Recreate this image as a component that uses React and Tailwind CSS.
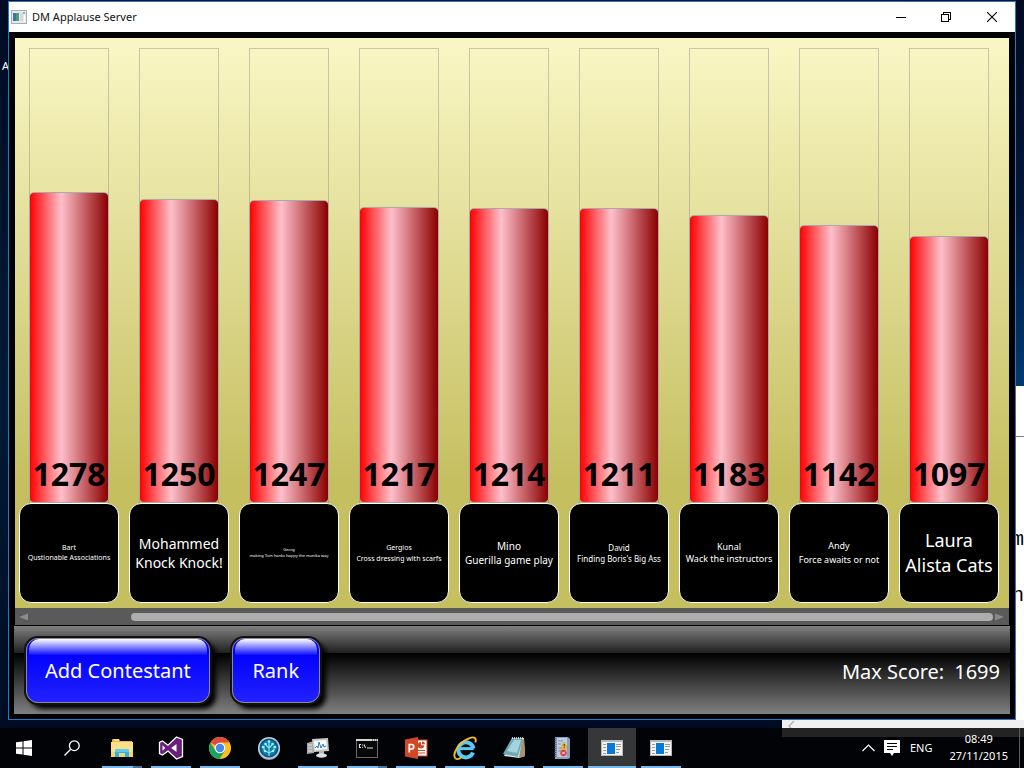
import React from "react";

const MAX_SCORE = 1699;
const SCALE_TOP = MAX_SCORE * 1.098;

const contestants = [
  { score: 1278, name: "Bart", act: "Qustionable Associations", text: "text-[7px] leading-[10px]" },
  { score: 1250, name: "Mohammed", act: "Knock Knock!", text: "text-[14px] leading-[19px]" },
  { score: 1247, name: "Georg", act: "making Tom hanks happy the monika way", text: "text-[4px] leading-[6px]" },
  { score: 1217, name: "Gergios", act: "Cross dressing with scarfs", text: "text-[7px] leading-[11px]" },
  { score: 1214, name: "Mino", act: "Guerilla game play", text: "text-[10px] leading-[14px]" },
  { score: 1211, name: "David", act: "Finding Boris's Big Ass", text: "text-[8px] leading-[11px]" },
  { score: 1183, name: "Kunal", act: "Wack the instructors", text: "text-[9px] leading-[12px]" },
  { score: 1142, name: "Andy", act: "Force awaits or not", text: "text-[9px] leading-[14px]" },
  { score: 1097, name: "Laura", act: "Alista Cats", text: "text-[18px] leading-[25px]" },
];

function AppIcon() {
  return (
    <svg width="16" height="14" viewBox="0 0 16 14" aria-hidden="true">
      <rect x="0.5" y="0.5" width="15" height="13" fill="#e9e9ec" stroke="#aaacb4" />
      <rect x="2" y="3" width="6" height="8" fill="#4f9a80" />
      <rect x="2" y="3" width="3" height="8" fill="#3c7a9a" />
      <rect x="9" y="3" width="3" height="8" fill="#d6d8da" />
      <rect x="12" y="2" width="2" height="2" fill="#7ec0b0" />
      <rect x="13" y="5" width="1" height="7" fill="#ffffff" />
    </svg>
  );
}

function TitleBar() {
  return (
    <header className="flex h-[30px] shrink-0 items-center bg-white pl-[2px] text-black">
      <AppIcon />
      <h1 className="ml-[5px] flex-1 text-[11px] leading-4 text-[#111]">DM Applause Server</h1>
      <button type="button" aria-label="Minimize" className="flex h-full w-11 items-center justify-center">
        <svg width="10" height="10" viewBox="0 0 10 10" shapeRendering="crispEdges"><path d="M0 5.5H10" stroke="#000" /></svg>
      </button>
      <button type="button" aria-label="Restore" className="flex h-full w-[46px] items-center justify-center">
        <svg width="10" height="10" viewBox="0 0 10 10" shapeRendering="crispEdges" fill="none" stroke="#000">
          <rect x="0.5" y="2.5" width="7" height="7" />
          <path d="M2.5 2.5V0.5H9.5V7.5H7.5" />
        </svg>
      </button>
      <button type="button" aria-label="Close" className="flex h-full w-[46px] items-center justify-center">
        <svg width="10" height="10" viewBox="0 0 10 10"><path d="M0 0L10 10M10 0L0 10" stroke="#000" strokeWidth="1.1" /></svg>
      </button>
    </header>
  );
}

function Contestant({ score, name, act, text }) {
  return (
    <li className="flex w-[100px] shrink-0 flex-col items-center">
      <div className="flex w-20 flex-1 flex-col justify-end border border-b-0 border-[#808080]/40">
        <div
          className="-mx-px flex items-end justify-center rounded-[5px] border border-[#a9a9a9] bg-[linear-gradient(90deg,#ff0000_0%,#ffc0cb_40%,#8b0000_100%)] pb-[6px]"
          style={{ height: `${(score / SCALE_TOP) * 100}%` }}
        >
          <span className="text-[32px] leading-[44px] font-bold text-black">{score}</span>
        </div>
      </div>
      <div className="flex h-[100px] w-full flex-col items-center justify-center rounded-xl border border-[#fffff0] bg-black text-white">
        <div className={`text-center whitespace-nowrap ${text}`}>
          <p>{name}</p>
          <p>{act}</p>
        </div>
      </div>
    </li>
  );
}

function ScrollBar() {
  return (
    <div className="flex h-[17px] shrink-0 items-center bg-[#5a5a5a] pr-[5px] pl-1">
      <svg width="9" height="8" viewBox="0 0 9 8" aria-hidden="true"><path d="M9 0.5V7.5L0 4Z" fill="#8a8a8a" /></svg>
      <div className="flex flex-1 justify-end pr-[2px]">
        <div className="h-2 w-[89.3%] rounded-full bg-[#adadad]" />
      </div>
      <svg width="9" height="8" viewBox="0 0 9 8" aria-hidden="true"><path d="M0 0.5V7.5L9 4Z" fill="#8a8a8a" /></svg>
    </div>
  );
}

function GlossButton({ children }) {
  return (
    <button
      type="button"
      className="relative h-[65px] min-w-[88px] rounded-xl border border-[#8c8c8c] bg-[linear-gradient(180deg,#0000ff_20%,#2222ff_100%)] px-[18px] pt-[2px] text-[20px] leading-7 text-white shadow-[0_0_0_2px_#111,5px_5px_5px_1px_#000]"
    >
      <span className="absolute inset-x-[2px] top-0 h-4 rounded-t-[10px] bg-[linear-gradient(180deg,#ffffff_0%,rgba(255,255,255,0.05)_100%)]" />
      <span className="relative">{children}</span>
    </button>
  );
}

function ControlBar() {
  return (
    <footer className="-mx-px mt-px flex h-[88px] shrink-0 items-center justify-between bg-[linear-gradient(180deg,#808080_0%,#222222_30%,#000000_31%,#808080_100%)] pr-[10px] pl-3 text-white">
      <div className="flex gap-[22px]">
        <GlossButton>Add Contestant</GlossButton>
        <GlossButton>Rank</GlossButton>
      </div>
      <p className="flex gap-[10px] pt-1 text-[20px] leading-7">
        <span>Max Score:</span>
        <span>{MAX_SCORE}</span>
      </p>
    </footer>
  );
}

const icons = {
  explorer: (
    <svg width="24" height="24" viewBox="0 0 24 24">
      <path d="M2 4Q2 3 3 3H9L10 5H22V8H2Z" fill="#e9b93e" />
      <path d="M4 4H9" stroke="#fff" />
      <rect x="1" y="6" width="22" height="15" fill="#fbe08a" />
      <rect x="1" y="16" width="22" height="5" fill="#f5d470" />
      <path d="M5 21V15Q5 13 7 13H17Q19 13 19 15V21H15V17H9V21Z" fill="#29b2e8" />
      <path d="M5 16V15Q5 13 7 13H17Q19 13 19 15V16Z" fill="#55cdf5" />
    </svg>
  ),
  vs: (
    <svg width="26" height="24" viewBox="0 0 26 24">
      <path d="M18.500 1L24.500 3.500V20.500L18.500 23L10 15L4.500 19L1.500 17.500V6.500L4.500 5L10 9.200Z" fill="#68217a" stroke="#fff" strokeWidth="1.300" />
      <path d="M18.500 8V16L13.200 12ZM4.500 9.300V14.700L7.200 12Z" fill="#fff" />
    </svg>
  ),
  chrome: (
    <svg width="24" height="24" viewBox="0 0 24 24">
      <circle cx="12" cy="12" r="11" fill="#fbc116" />
      <path d="M12 12L2.500 6.500A11 11 0 0 1 21.500 6.500Z" fill="#dd4b3e" />
      <path d="M2.500 6.500A11 11 0 0 0 11.500 23L17 14.500H12L7.300 14.500Z" fill="#1ba261" />
      <path d="M12 6.500H21.500L17 14.500Z" fill="#fbc116" />
      <circle cx="12" cy="12" r="5.300" fill="#fff" />
      <circle cx="12" cy="12" r="4.200" fill="#4688f1" />
    </svg>
  ),
  tree: (
    <svg width="24" height="24" viewBox="0 0 24 24">
      <circle cx="12" cy="13" r="11" fill="#7f92aa" />
      <circle cx="12" cy="12" r="11" fill="#b9cbdd" />
      <circle cx="12" cy="12" r="9.500" fill="#0d5480" />
      <circle cx="12" cy="12" r="7.800" fill="#0d7cab" />
      <g fill="none" stroke="#8de6e8" strokeWidth="1.100">
        <path d="M12 20V6M12 17L7 14V10M12 17L17 14V10M12 12L9 9M12 12L15 9" />
      </g>
      <g fill="#a8f2ee">
        <circle cx="12" cy="5.500" r="1.300" /><circle cx="8.500" cy="8" r="1.300" /><circle cx="15.500" cy="8" r="1.300" />
        <circle cx="6" cy="11" r="1.300" /><circle cx="18" cy="11" r="1.300" /><circle cx="8" cy="15" r="1.200" /><circle cx="16" cy="15" r="1.200" />
      </g>
    </svg>
  ),
  monitor: (
    <svg width="24" height="24" viewBox="0 0 24 24">
      <path d="M1 7L8 5V17L1 18Z" fill="#a9aaa8" />
      <path d="M2 9H6M2 12H6M2 15H6" stroke="#e4e4e2" />
      <path d="M6 3L22 2L23 15L8 16Z" fill="#c9cac7" />
      <path d="M8 5L20 4L21 13L9 14Z" fill="#f7fafc" />
      <path d="M9 12L11 10L12 12L13 6L15 12L17 8L18 11L20 10" fill="none" stroke="#2f80b8" />
      <path d="M13 15H18L18 19H13Z" fill="#b4b4b2" />
      <ellipse cx="15.500" cy="19.500" rx="5.500" ry="2.200" fill="#e0e0de" />
    </svg>
  ),
  cmd: (
    <svg width="24" height="24" viewBox="0 0 24 24">
      <rect x="1" y="3" width="22" height="19" fill="#6a6a6a" />
      <rect x="2" y="5" width="20" height="16" fill="#080808" />
      <rect x="1" y="3" width="22" height="2" fill="#d6d6d6" />
      <path d="M17 4H18M19 4H20M21 4H22" stroke="#333" />
      <path d="M6 8.500H4.500V11.500H6M7.500 8.500V9.500M7.500 10.800V11.800M9 8.500L10.500 11.800M12 12H18" fill="none" stroke="#e0e0e0" strokeWidth="1.100" />
    </svg>
  ),
  powerpoint: (
    <svg width="24" height="24" viewBox="0 0 24 24">
      <rect x="12" y="4" width="11" height="16" fill="#fff" stroke="#d24726" />
      <path d="M17 6A3.200 3.200 0 1 0 20.200 9.200H17Z" fill="#d24726" />
      <path d="M18 5.500A3 3 0 0 1 21 8.300H18Z" fill="#d24726" />
      <path d="M14 14.500H21M14 17H21" stroke="#d24726" strokeWidth="1.200" />
      <path d="M1 3.500L14 1V23L1 20.500Z" fill="#d24726" />
      <path d="M5.300 16.500V8.500H7.500A2.100 2.100 0 0 1 7.500 13H5.300" fill="none" stroke="#fff" strokeWidth="1.700" />
    </svg>
  ),
  ie: (
    <svg width="24" height="24" viewBox="0 0 24 24">
      <path d="M7 12.600H20.600" stroke="#58c8f5" strokeWidth="3" />
      <path d="M20 16.500A7.600 7.600 0 1 1 20.400 12.600" fill="none" stroke="#58c8f5" strokeWidth="4" />
      <path d="M2.500 22.500C-1.500 18 6 6.500 16 2.300C21 0.300 24 1.800 22.300 6.500" fill="none" stroke="#f3bd25" strokeWidth="1.900" />
      <path d="M2.500 22.500C4 23.600 7 22.500 9 21" fill="none" stroke="#f3bd25" strokeWidth="1.700" />
    </svg>
  ),
  notepad: (
    <svg width="24" height="24" viewBox="0 0 24 24">
      <path d="M10 2H22L23 20L17 22L2 20Z" fill="#e8e5da" />
      <path d="M20 4L22 3L23 20L17 22Z" fill="#a5926e" />
      <path d="M10 2H21L16 21L1 18Z" fill="#6fa9b8" />
      <path d="M12 4H19L15 17L5 15Z" fill="#a4d3dc" />
      <path d="M10 2H21" stroke="#f0f6f6" strokeWidth="1.500" strokeDasharray="1 1" />
    </svg>
  ),
  eventLog: (
    <svg width="24" height="24" viewBox="0 0 24 24">
      <path d="M4 1H17L19 3V22L17 23H4Z" fill="#8d9fbd" />
      <path d="M6 2H16V21H6Z" fill="#bfcde0" />
      <path d="M4.500 2V22" stroke="#56637b" strokeWidth="2" strokeDasharray="1 1" />
      <path d="M7 5H12M7 8H10M7 12H10M7 15H10" stroke="#8095b5" />
      <path d="M13 6L17 13H9.500Z" fill="#f2c22b" stroke="#ba8d12" strokeWidth="0.500" />
      <path d="M13.200 8V10.500M13.200 11.200V12" stroke="#333" />
      <circle cx="12.500" cy="17" r="3.200" fill="#d93a3f" />
      <path d="M11.200 15.700L13.800 18.300M13.800 15.700L11.200 18.300" stroke="#fff" />
    </svg>
  ),
  window: (
    <svg width="22" height="18" viewBox="0 0 22 18" shapeRendering="crispEdges">
      <rect x="0" y="1" width="22" height="16" fill="#b8b8b8" />
      <rect x="1" y="3" width="20" height="13" fill="#f4f4f4" />
      <rect x="6" y="4" width="8" height="11" fill="#0879da" />
      <path d="M2 5.500H5M2 8.500H5M2 11.500H5M2 14.500H5M15 5.500H20M15 7.500H20M15 10.500H19M15 13.500H18" stroke="#999" />
    </svg>
  ),
};

const tasks = [
  { id: "explorer", label: "File Explorer", icon: "explorer", state: "multi" },
  { id: "vs", label: "Visual Studio", icon: "vs", state: "open" },
  { id: "chrome", label: "Chrome", icon: "chrome", state: "open" },
  { id: "tree", label: "Source Control", icon: "tree", state: "closed" },
  { id: "monitor", label: "Performance Monitor", icon: "monitor", state: "open" },
  { id: "cmd", label: "Command Prompt", icon: "cmd", state: "multi" },
  { id: "ppt", label: "PowerPoint", icon: "powerpoint", state: "open" },
  { id: "ie", label: "Internet Explorer", icon: "ie", state: "open" },
  { id: "notepad", label: "Notepad", icon: "notepad", state: "open" },
  { id: "log", label: "Event Viewer", icon: "eventLog", state: "open" },
  { id: "applause", label: "DM Applause Server", icon: "window", state: "active" },
  { id: "client", label: "DM Applause Client", icon: "window", state: "open" },
];

function Task({ label, icon, state }) {
  return (
    <button
      type="button"
      aria-label={label}
      className={`flex h-10 w-12 flex-col items-center ${state === "active" ? "bg-[#353739]" : ""}`}
    >
      <span className="flex flex-1 items-center pt-px">{icons[icon]}</span>
      {state === "open" && <span className="h-[2px] w-10 bg-[#76b9ed]" />}
      {state === "active" && <span className="h-[2px] w-full bg-[#76b9ed]" />}
      {state === "multi" && (
        <span className="flex h-[2px] w-10">
          <span className="flex-1 bg-[#76b9ed]" />
          <span className="w-[9px] bg-[#4a7599]" />
        </span>
      )}
      {state === "closed" && <span className="h-[2px]" />}
    </button>
  );
}

function TaskBar() {
  return (
    <nav className="relative flex h-10 shrink-0 items-stretch bg-[#020306] text-white">
      <div className="absolute top-0 right-0 h-[9px] w-[242px] bg-[#232323]" />
      <button type="button" aria-label="Start" className="flex w-12 items-center justify-center">
        <svg width="16" height="16" viewBox="0 0 16 16" fill="#fff">
          <path d="M0 2.300L6.500 1.400V7.500H0ZM7.500 1.200L16 0V7.500H7.500ZM0 8.500H6.500V14.600L0 13.700ZM7.500 8.500H16V16L7.500 14.800Z" />
        </svg>
      </button>
      <button type="button" aria-label="Search" className="flex w-12 items-center justify-center">
        <svg width="16" height="16" viewBox="0 0 16 16" fill="none" stroke="#fff" strokeWidth="1.300">
          <circle cx="10.300" cy="5.700" r="4.900" />
          <path d="M6.700 9.300L0.500 15.500" />
        </svg>
      </button>
      <div className="ml-[2px] flex flex-1 gap-px">
        {tasks.map((t) => (
          <Task key={t.id} {...t} />
        ))}
      </div>
      <div className="relative flex items-center">
        <button type="button" aria-label="Show hidden icons" className="mr-[9px]">
          <svg width="13" height="8" viewBox="0 0 13 8" fill="none" stroke="#fff" strokeWidth="1.200"><path d="M0.500 7L6.500 1L12.500 7" /></svg>
        </button>
        <button type="button" aria-label="Notifications" className="mr-[10px]">
          <svg width="16" height="16" viewBox="0 0 16 16">
            <path d="M0 0H16V13H10L8 16L6 13H0Z" fill="#fff" />
            <path d="M3 3.500H13M3 6.500H13M3 9.500H9" stroke="#000" />
          </svg>
        </button>
        <span className="mr-[17px] text-[11px] leading-4">ENG</span>
        <time dateTime="2015-11-27T08:49" className="mr-[11px] pb-[3px] text-center text-[11px] leading-[17px]">
          <span className="block">08:49</span>
          <span className="block">27/11/2015</span>
        </time>
        <div className="mr-1 h-full w-px bg-[#5c5c5c]" />
      </div>
    </nav>
  );
}

export default function App() {
  return (
    <div className="flex min-h-screen flex-col overflow-hidden font-['Noto_Sans','Open_Sans',sans-serif]">
      <div className="relative flex flex-1 flex-col bg-[linear-gradient(180deg,#000b24_0%,#001a36_55%,#000c24_100%)] px-2 pt-px pb-2">
        <span className="absolute top-[58px] left-[2px] text-[11px] leading-4 text-white">A</span>
        <div className="absolute top-0 right-0 h-[386px] w-[120px] bg-[linear-gradient(180deg,#000b20_0%,#00173a_55%,#003a70_100%)]" />
        <div className="absolute top-[386px] right-0 bottom-0 flex w-[242px] flex-col overflow-hidden bg-white font-['Liberation_Mono',monospace] text-[20px] leading-6 text-black">
          <div className="h-[51px] shrink-0 border-b border-[#808080]" />
          <p className="mt-[91px] pl-[230px]">m</p>
          <p className="mt-8 pl-[230px]">n</p>
          <div className="mt-auto flex h-2 shrink-0 items-center bg-[#f0f0f0] pl-[6px]">
            <svg width="7" height="8" viewBox="0 0 7 8" fill="none" stroke="#b5b5b5" strokeWidth="1.500"><path d="M6 1L1 6L3 8" /></svg>
          </div>
        </div>

        <main className="relative flex flex-1 flex-col border border-[#1f7bc8] bg-black">
          <TitleBar />
          <div className="flex min-h-0 flex-1 flex-col px-[6px] pt-[6px] pb-[5px]">
            <ul className="flex flex-1 gap-[10px] overflow-hidden bg-[linear-gradient(180deg,#faf7c6_0%,#c5bf60_78%,#c5bf60_100%)] pt-[10px] pr-[10px] pb-[5px] pl-1">
              {contestants.map((c) => (
                <Contestant key={c.name} {...c} />
              ))}
            </ul>
            <ScrollBar />
            <ControlBar />
          </div>
        </main>
      </div>
      <TaskBar />
    </div>
  );
}
